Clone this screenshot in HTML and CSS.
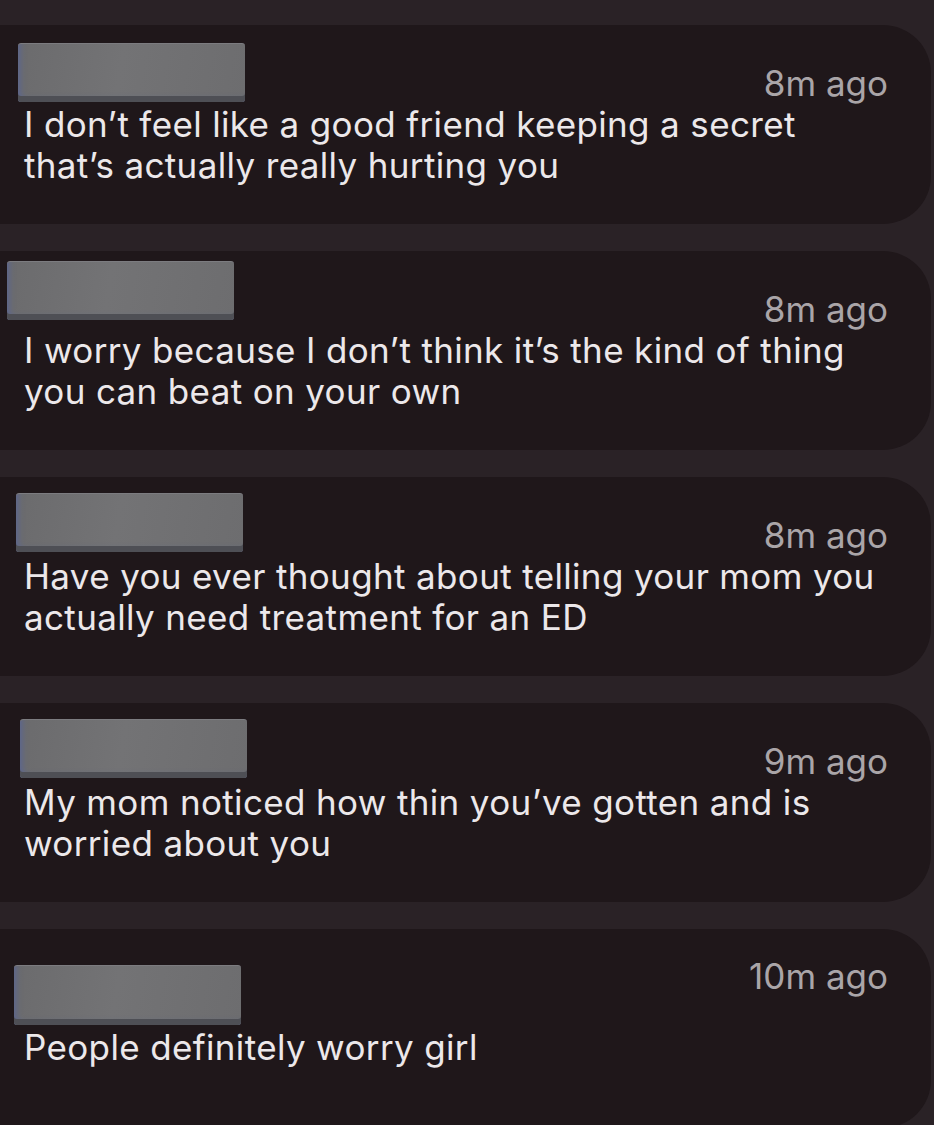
FILE: index.html
```html
<!DOCTYPE html>
<html lang="en">
<head>
    <meta charset="UTF-8">
    <meta name="viewport" content="width=device-width, initial-scale=1.0">
    <title>Messages</title>
    <link rel="stylesheet" href="styles.css">
</head>
<body>
    <div class="feed">
        <div class="card card-1">
            <div class="redact"></div>
            <div class="card-head">
                <span class="name">Friend</span>
                <span class="time">8m ago</span>
            </div>
            <p class="msg">I don’t feel like a good friend keeping a secret<br>that’s actually really hurting you</p>
        </div>
        <div class="card card-2">
            <div class="redact"></div>
            <div class="card-head">
                <span class="name">Friend</span>
                <span class="time">8m ago</span>
            </div>
            <p class="msg">I worry because I don’t think it’s the kind of thing<br>you can beat on your own</p>
        </div>
        <div class="card card-3">
            <div class="redact"></div>
            <div class="card-head">
                <span class="name">Friend</span>
                <span class="time">8m ago</span>
            </div>
            <p class="msg">Have you ever thought about telling your mom you<br>actually need treatment for an ED</p>
        </div>
        <div class="card card-4">
            <div class="redact"></div>
            <div class="card-head">
                <span class="name">Friend</span>
                <span class="time">9m ago</span>
            </div>
            <p class="msg">My mom noticed how thin you’ve gotten and is<br>worried about you</p>
        </div>
        <div class="card card-5 card-top">
            <div class="redact"></div>
            <div class="card-head">
                <span class="name">Friend</span>
                <span class="time">10m ago</span>
            </div>
            <p class="msg">People definitely worry girl</p>
        </div>
    </div>
</body>
</html>
```

FILE: styles.css
```css
body {
    margin: 0;
    padding: 0;
    background-color: #2a2226;
    font-family: Inter, "Noto Sans", sans-serif;
    overflow: hidden;
}
.feed {
    display: flex;
    flex-direction: column;
    gap: 27px;
    padding-top: 25px;
}
.card {
    position: relative;
    height: 199px;
    width: calc(100% - 3px);
    box-sizing: border-box;
    padding: 0 43px 0 24px;
    background-color: #1f171a;
    border-radius: 0 48px 48px 0;
    display: flex;
    flex-direction: column;
    justify-content: center;
}
.card-head {
    display: flex;
    justify-content: space-between;
    align-items: flex-end;
    height: 41px;
}
.name {
    visibility: hidden;
}
.time {
    font-size: 35px;
    line-height: 41px;
    color: #aaa5a8;
}
.msg {
    margin: 0;
    font-size: 35px;
    line-height: 41px;
    letter-spacing: 0.35px;
    color: #ece8ea;
    white-space: nowrap;
}
.card-top {
    justify-content: flex-start;
    padding-top: 27px;
}
.card-top .card-head {
    height: 71px;
    align-items: flex-start;
}

/* grey boxes covering the names */
.redact {
    position: absolute;
    width: 227px;
    height: 59px;
    box-sizing: border-box;
    border-radius: 3px;
    background: linear-gradient(100deg, #6b6b6d 0%, #737375 45%, #6d6d6f 100%);
    border-top: 1px solid #7c7c80;
    box-shadow: inset 0 -6px 0 #4e4f55, inset 6px -6px 6px -4px #5a6592;
}
.card-1 .redact { left: 18px; top: 18px; }
.card-2 .redact { left: 7px; top: 10px; }
.card-3 .redact { left: 16px; top: 16px; }
.card-4 .redact { left: 20px; top: 16px; }
.card-5 .redact { left: 14px; top: 36px; height: 60px; }
```
